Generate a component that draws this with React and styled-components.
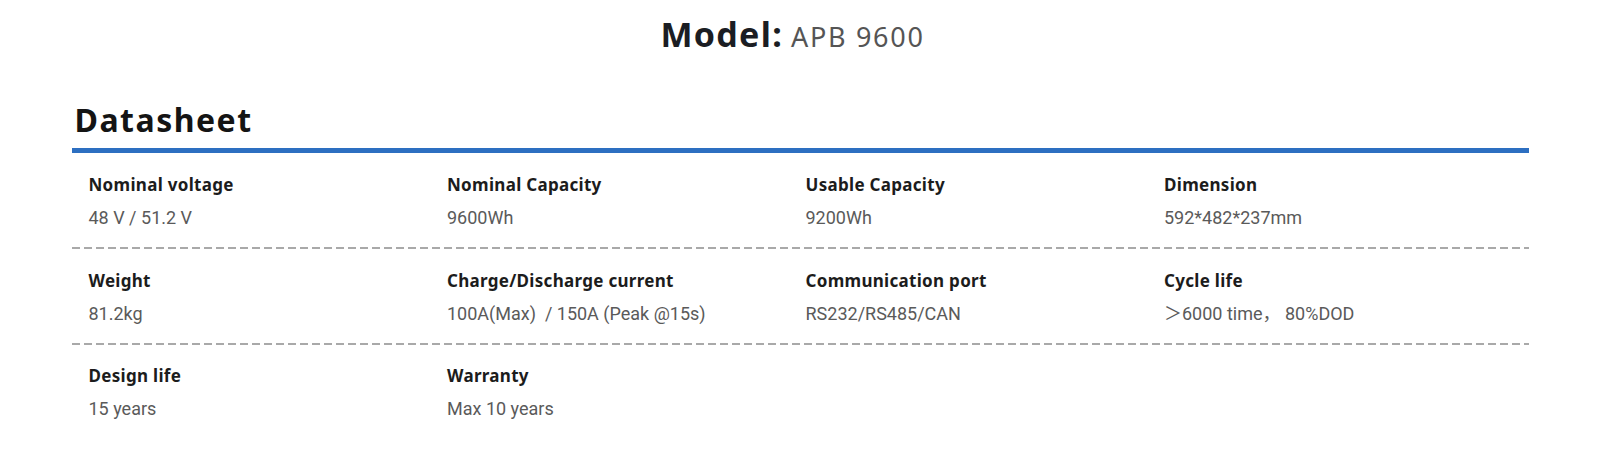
import styled, { createGlobalStyle } from "styled-components";

const GlobalStyle = createGlobalStyle`
  body {
    margin: 0;
    background: #fff;
    font-family: "Noto Sans", sans-serif;
  }
`;

const Page = styled.main`
  width: 1457px;
  margin: 0 auto;
  padding-top: 12px;
`;

const ModelTitle = styled.h1`
  margin: 0;
  text-align: center;
  font-family: "Noto Sans", sans-serif;
  font-size: 34px;
  line-height: 45px;
  font-weight: 700;
  letter-spacing: 1.3px;
  color: #1b1d23;
  padding-right: 15px;

  span {
    margin-left: 8px;
    font-size: 27px;
    font-weight: 400;
    letter-spacing: 1.7px;
    color: #555;
  }
`;

const Heading = styled.h2`
  margin: 41px 0 0;
  padding: 0 3px 8px;
  font-family: "Noto Sans", sans-serif;
  font-size: 32px;
  line-height: 40px;
  font-weight: 700;
  letter-spacing: 1.5px;
  color: #141414;
  border-bottom: 5px solid #2d6fc1;
`;

const Row = styled.div`
  display: grid;
  grid-template-columns: repeat(4, 1fr);
  padding: ${({ $last }) => ($last ? "19px 6px 17px 17px" : "20px 6px 19px 17px")};
  background-image: ${({ $last }) =>
    $last
      ? "none"
      : "repeating-linear-gradient(to right, #a9a9a9 0 8px, transparent 8px 12px)"};
  background-size: 100% 2px;
  background-position: left bottom;
  background-repeat: no-repeat;
`;

const Cell = styled.div`
  display: flex;
  flex-direction: column;
  gap: 9px;
`;

const Label = styled.div`
  font-family: "Noto Sans", sans-serif;
  font-size: 17px;
  line-height: 24px;
  font-weight: 700;
  letter-spacing: 0.3px;
  color: #1c1c1c;
`;

const Value = styled.div`
  font-family: Roboto, "Noto Sans CJK SC", sans-serif;
  font-size: 18px;
  line-height: 24px;
  color: #5a5a5a;
  white-space: pre;
`;

const rows = [
  [
    ["Nominal voltage", "48 V / 51.2 V"],
    ["Nominal Capacity", "9600Wh"],
    ["Usable Capacity", "9200Wh"],
    ["Dimension", "592*482*237mm"],
  ],
  [
    ["Weight", "81.2kg"],
    ["Charge/Discharge current", "100A(Max)  / 150A (Peak @15s)"],
    ["Communication port", "RS232/RS485/CAN"],
    ["Cycle life", "＞6000 time， 80%DOD"],
  ],
  [
    ["Design life", "15 years"],
    ["Warranty", "Max 10 years"],
  ],
];

export default function App() {
  return (
    <>
      <GlobalStyle />
      <Page>
        <ModelTitle>
          Model:<span>APB 9600</span>
        </ModelTitle>
        <Heading>Datasheet</Heading>
        {rows.map((row, i) => (
          <Row key={i} $last={i === rows.length - 1}>
            {row.map(([label, value]) => (
              <Cell key={label}>
                <Label>{label}</Label>
                <Value>{value}</Value>
              </Cell>
            ))}
          </Row>
        ))}
      </Page>
    </>
  );
}
